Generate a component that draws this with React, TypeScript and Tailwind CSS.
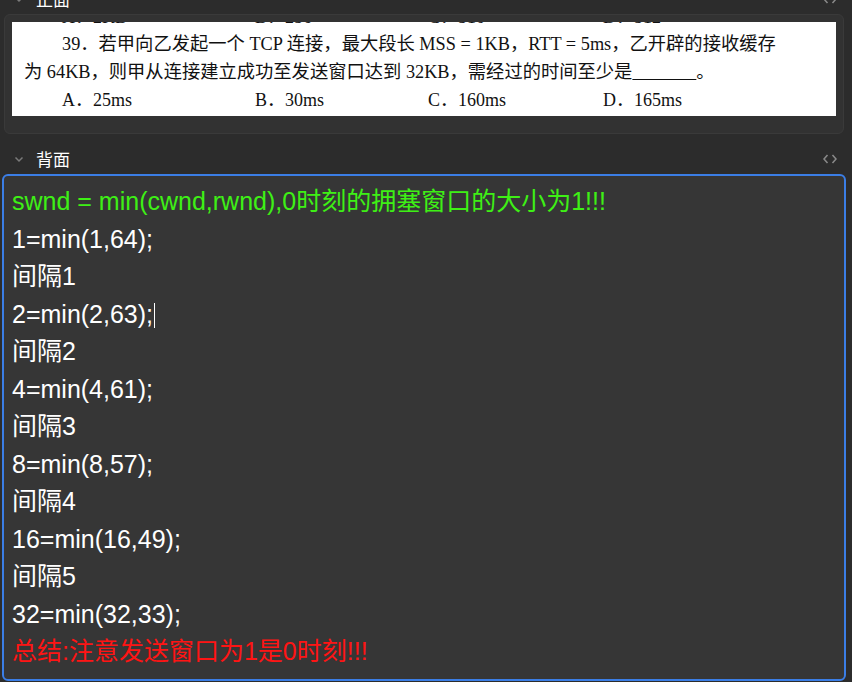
import React from "react";

const serif = { fontFamily: '"Liberation Serif", "Noto Sans CJK SC", serif' };

function Chevron() {
  return (
    <svg width="12" height="12" viewBox="0 0 12 12" className="text-[#7a7a7a]">
      <path d="M2.5 4.5 L6 8 L9.5 4.5" fill="none" stroke="currentColor" strokeWidth="1.5" />
    </svg>
  );
}

function CodeIcon() {
  return (
    <svg width="16" height="12" viewBox="0 0 16 12" className="text-[#8a8a8a]">
      <path d="M5.5 2 L2 6 L5.5 10 M10.5 2 L14 6 L10.5 10" fill="none" stroke="currentColor" strokeWidth="1.5" />
    </svg>
  );
}

function Header({ label }: { label: string }) {
  return (
    <div className="flex h-[30px] items-center pl-[13px] pr-[14px]">
      <Chevron />
      <span className="ml-[11px] text-[17px] text-white" style={{ fontFamily: '"Noto Sans CJK SC", sans-serif' }}>
        {label}
      </span>
      <div className="flex-1" />
      <CodeIcon />
    </div>
  );
}

function Options({ items }: { items: string[] }) {
  return (
    <div className="flex pl-[50px] text-[18px] leading-[28px] whitespace-nowrap">
      <span className="w-[193px]">{items[0]}</span>
      <span className="w-[173px]">{items[1]}</span>
      <span className="w-[175px]">{items[2]}</span>
      <span>{items[3]}</span>
    </div>
  );
}

const lines: { t: string; c: string; cursor?: boolean }[] = [
  { t: "swnd = min(cwnd,rwnd),0时刻的拥塞窗口的大小为1!!!", c: "text-[#3ef015]" },
  { t: "1=min(1,64);", c: "text-white" },
  { t: "间隔1", c: "text-white" },
  { t: "2=min(2,63);", c: "text-white", cursor: true },
  { t: "间隔2", c: "text-white" },
  { t: "4=min(4,61);", c: "text-white" },
  { t: "间隔3", c: "text-white" },
  { t: "8=min(8,57);", c: "text-white" },
  { t: "间隔4", c: "text-white" },
  { t: "16=min(16,49);", c: "text-white" },
  { t: "间隔5", c: "text-white" },
  { t: "32=min(32,33);", c: "text-white" },
  { t: "总结:注意发送窗口为1是0时刻!!!", c: "text-[#ff1414]" },
];

export default function App() {
  return (
    <div className="h-[682px] w-[852px] overflow-hidden bg-[#2c2c2c]">
      <div className="-mt-[16px]">
        <Header label="正面" />
        <div className="ml-[4px] mr-[8px] rounded-[6px] border border-[#3a3a3a] bg-[#323232] px-[7px] pb-[17px] pt-[7px]">
          <div className="flex h-[94px] flex-col overflow-hidden bg-white text-[#111]" style={serif}>
            <div className="h-[6px] shrink-0 overflow-hidden">
              <div className="-mt-[19px]">
                <Options items={["A．2KB", "B．256", "C．510", "D．512"]} />
              </div>
            </div>
            <div className="mt-[2px] pl-[50px] text-[18.3px] leading-[28px] whitespace-nowrap">
              39．若甲向乙发起一个 TCP 连接，最大段长 MSS = 1KB，RTT = 5ms，乙开辟的接收缓存
            </div>
            <div className="pl-[12px] text-[18.3px] leading-[28px] whitespace-nowrap">
              为 64KB，则甲从连接建立成功至发送窗口达到 32KB，需经过的时间至少是
              <span className="underline">{"\u00a0\u00a0\u00a0\u00a0\u00a0\u00a0\u00a0\u00a0\u00a0\u00a0\u00a0\u00a0\u00a0\u00a0"}</span>。
            </div>
            <Options items={["A．25ms", "B．30ms", "C．160ms", "D．165ms"]} />
          </div>
        </div>
        <div className="h-[10px]" />
        <Header label="背面" />
        <div
          className="ml-[2px] mr-[6px] h-[507px] rounded-[6px] border-2 border-[#3b7ee6] bg-[#363636] pl-[8px] pt-[7px]"
          style={{ fontFamily: '"Liberation Sans", "Noto Sans CJK SC", sans-serif' }}
        >
          {lines.map((l, i) => (
            <div key={i} className={`text-[25px] leading-[37.5px] whitespace-nowrap ${l.c}`}>
              {l.t}
              {l.cursor && <span className="ml-[1px] inline-block h-[25px] w-[1px] bg-white align-middle" />}
            </div>
          ))}
        </div>
      </div>
    </div>
  );
}
